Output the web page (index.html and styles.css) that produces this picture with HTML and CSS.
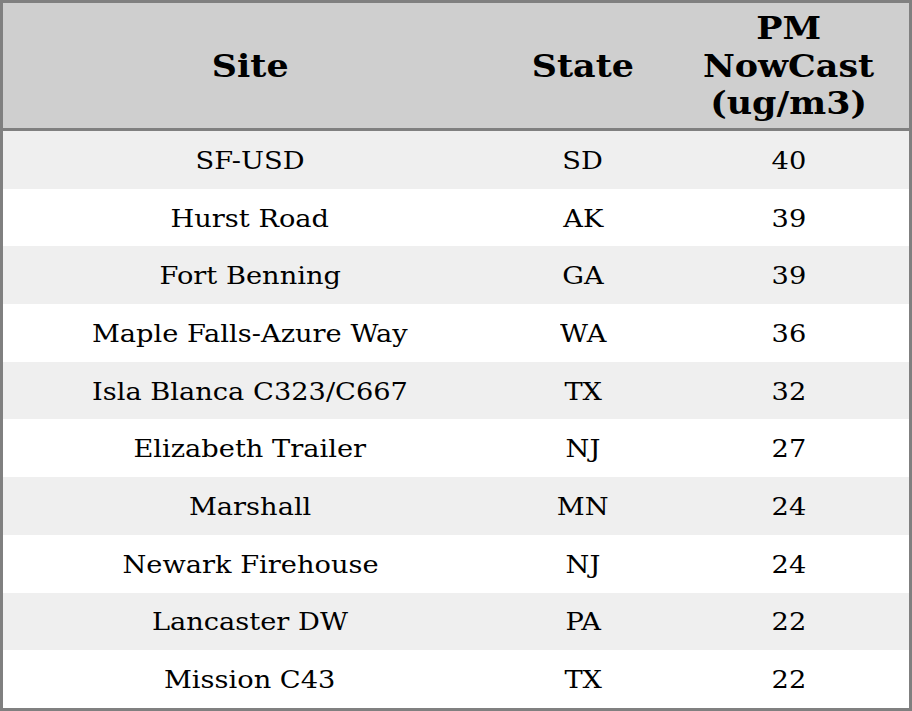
FILE: index.html
```html
<!DOCTYPE html>
<html>
<head>
<meta charset="utf-8">
<link rel="stylesheet" href="styles.css">
</head>
<body>
<table class="pm-table">
  <colgroup>
    <col class="col-site">
    <col class="col-state">
    <col class="col-pm">
  </colgroup>
  <thead>
    <tr>
      <th><span class="txt">Site</span></th>
      <th><span class="txt">State</span></th>
      <th><span class="txt">PM<br>NowCast<br>(ug/m3)</span></th>
    </tr>
  </thead>
  <tbody>
    <tr><td><span class="txt">SF-USD</span></td><td><span class="txt">SD</span></td><td><span class="txt">40</span></td></tr>
    <tr><td><span class="txt">Hurst Road</span></td><td><span class="txt">AK</span></td><td><span class="txt">39</span></td></tr>
    <tr><td><span class="txt">Fort Benning</span></td><td><span class="txt">GA</span></td><td><span class="txt">39</span></td></tr>
    <tr><td><span class="txt">Maple Falls-Azure Way</span></td><td><span class="txt">WA</span></td><td><span class="txt">36</span></td></tr>
    <tr><td><span class="txt">Isla Blanca C323/C667</span></td><td><span class="txt">TX</span></td><td><span class="txt">32</span></td></tr>
    <tr><td><span class="txt">Elizabeth Trailer</span></td><td><span class="txt">NJ</span></td><td><span class="txt">27</span></td></tr>
    <tr><td><span class="txt">Marshall</span></td><td><span class="txt">MN</span></td><td><span class="txt">24</span></td></tr>
    <tr><td><span class="txt">Newark Firehouse</span></td><td><span class="txt">NJ</span></td><td><span class="txt">24</span></td></tr>
    <tr><td><span class="txt">Lancaster DW</span></td><td><span class="txt">PA</span></td><td><span class="txt">22</span></td></tr>
    <tr><td><span class="txt">Mission C43</span></td><td><span class="txt">TX</span></td><td><span class="txt">22</span></td></tr>
  </tbody>
</table>
</body>
</html>
```
FILE: styles.css
```css
html, body {
  margin: 0;
  padding: 0;
  background: #ffffff;
}

.pm-table {
  width: 912px;
  height: 711px;
  box-sizing: border-box;
  border: 3px solid #808080;
  border-collapse: separate;
  border-spacing: 0;
  table-layout: fixed;
  font-family: "DejaVu Serif", serif;
  color: #000000;
}

.col-site { width: 494px; }
.col-state { width: 172px; }
.col-pm { width: 240px; }

.txt {
  display: inline-block;
  transform: scaleX(1.09);
}

.pm-table th {
  background: #cfcfcf;
  font-weight: bold;
  font-size: 32px;
  line-height: 37.5px;
  height: 128px;
  box-sizing: border-box;
  padding: 2px 0 0 0;
  border-bottom: 3px solid #808080;
  text-align: center;
  vertical-align: middle;
}

.pm-table td {
  font-size: 25px;
  line-height: 29px;
  height: 56.6px;
  padding: 1px 0 0 0;
  text-align: center;
  vertical-align: middle;
}

.pm-table tbody tr:nth-child(odd) td {
  background: #efefef;
}

.pm-table tbody tr:nth-child(even) td {
  background: #ffffff;
}
```
